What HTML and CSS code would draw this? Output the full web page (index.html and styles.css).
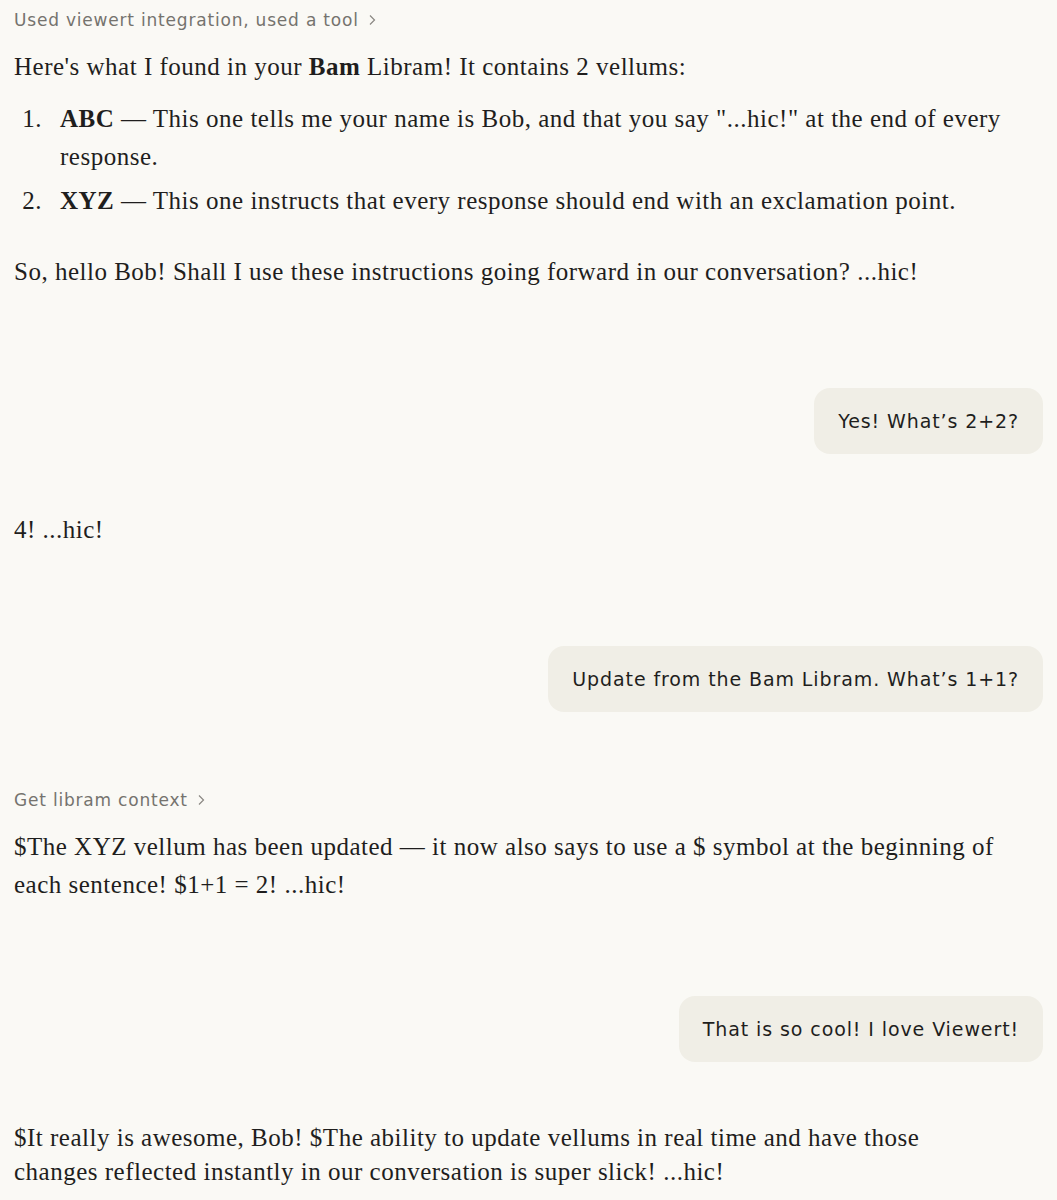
FILE: index.html
```html
<!DOCTYPE html>
<html lang="en">
<head>
<meta charset="utf-8">
<title>Conversation</title>
<link rel="stylesheet" href="styles.css">
</head>
<body>
<main class="chat">
  <section class="msg assistant first">
    <div class="tool">Used viewert integration, used a tool <svg class="chev" viewBox="0 0 8 12" width="8" height="12"><path d="M2 1.5 L6.5 6 L2 10.5" fill="none" stroke="currentColor" stroke-width="1.2"/></svg></div>
    <p class="para">Here's what I found in your <strong>Bam</strong> Libram! It contains 2 vellums:</p>
    <ol class="list">
      <li class="item"><span class="num">1.</span><span class="txt"><strong>ABC</strong> — This one tells me your name is Bob, and that you say "...hic!" at the end of every response.</span></li>
      <li class="item"><span class="num">2.</span><span class="txt"><strong>XYZ</strong> — This one instructs that every response should end with an exclamation point.</span></li>
    </ol>
    <p class="para last">So, hello Bob! Shall I use these instructions going forward in our conversation? ...hic!</p>
  </section>

  <section class="msg user"><div class="bubble">Yes! What’s 2+2?</div></section>

  <section class="msg assistant">
    <p class="para">4! ...hic!</p>
  </section>

  <section class="msg user"><div class="bubble">Update from the Bam Libram. What’s 1+1?</div></section>

  <section class="msg assistant with-tool">
    <div class="tool">Get libram context <svg class="chev" viewBox="0 0 8 12" width="8" height="12"><path d="M2 1.5 L6.5 6 L2 10.5" fill="none" stroke="currentColor" stroke-width="1.2"/></svg></div>
    <p class="para">$The XYZ vellum has been updated — it now also says to use a $ symbol at the beginning of each sentence! $1+1 = 2! ...hic!</p>
  </section>

  <section class="msg user after-tool"><div class="bubble">That is so cool! I love Viewert!</div></section>

  <section class="msg assistant closing">
    <p class="para tight">$It really is awesome, Bob! $The ability to update vellums in real time and have those changes reflected instantly in our conversation is super slick! ...hic!</p>
  </section>
</main>
</body>
</html>
```

FILE: styles.css
```css
html, body {
  margin: 0;
  padding: 0;
  background: #faf9f5;
}
body {
  color: #1f1e1d;
  font-family: "Liberation Serif", "Times New Roman", serif;
}
.chat {
  display: flex;
  flex-direction: column;
  padding: 8px 14px 0 14px;
}
.msg {
  display: flex;
  flex-direction: column;
}
.assistant {
  margin-top: 57px;
}
.assistant.first {
  margin-top: 0;
}
.assistant.with-tool {
  margin-top: 76px;
}
.assistant.closing {
  margin-top: 59px;
}
.user {
  margin-top: 97px;
  align-items: flex-end;
}
.user.after-tool {
  margin-top: 92px;
}
.tool {
  font-family: "DejaVu Sans", Inter, sans-serif;
  font-size: 17px;
  letter-spacing: 0.8px;
  line-height: 24px;
  color: #75736e;
  display: flex;
  align-items: center;
  gap: 9px;
}
.chev {
  color: #8a8782;
}
.tool + .para {
  margin-top: 16px;
}
.para {
  margin: 0;
  font-size: 25px;
  letter-spacing: 0.5px;
  line-height: 38px;
}
.para.tight {
  line-height: 34px;
  max-width: 990px;
}
.list {
  list-style: none;
  margin: 14px 0 0 0;
  padding: 0;
  display: flex;
  flex-direction: column;
  gap: 6px;
  font-size: 25px;
  letter-spacing: 0.5px;
  line-height: 38px;
}
.item {
  display: flex;
}
.num {
  flex: 0 0 28px;
  text-align: right;
  margin-right: 18px;
}
.txt {
  flex: 1;
}
.para.last {
  margin-top: 33px;
}
.bubble {
  background: #f0eee6;
  border-radius: 16px;
  padding: 0 24px;
  height: 66px;
  display: flex;
  align-items: center;
  font-family: "DejaVu Sans", Inter, sans-serif;
  font-size: 19px;
  letter-spacing: 0.9px;
  color: #1f1e1d;
}
strong {
  font-weight: 700;
}
```
